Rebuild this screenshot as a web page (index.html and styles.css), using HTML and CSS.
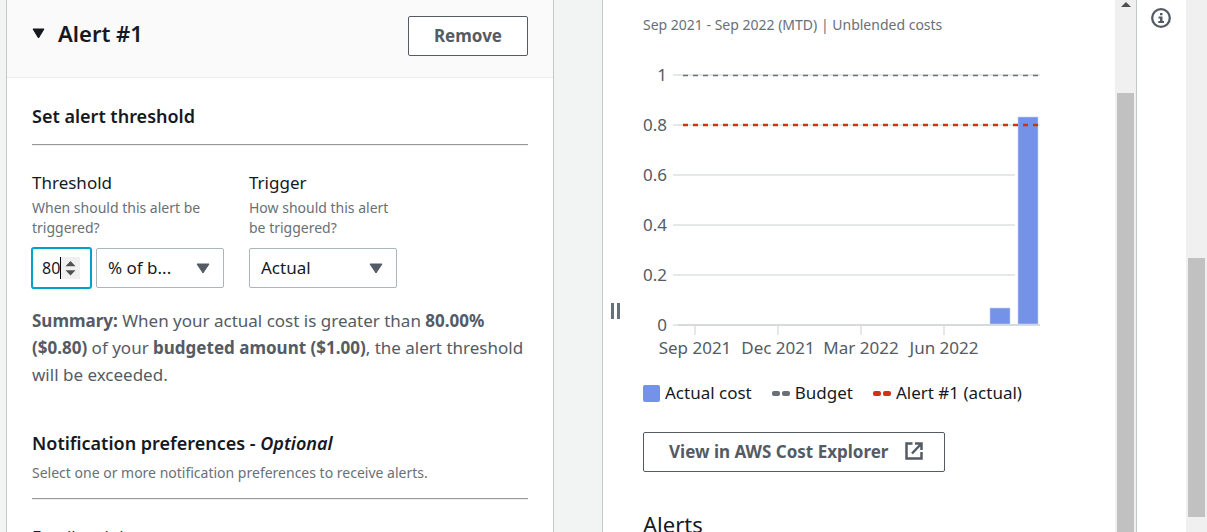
FILE: index.html
```html
<!DOCTYPE html>
<html lang="en">
<head>
<meta charset="utf-8">
<title>Configure alerts</title>
<link rel="stylesheet" href="styles.css">
</head>
<body>
<div class="app">
  <main class="main">
    <section class="card">
      <header class="card-header">
        <h2 class="card-title">
          <svg class="caret" width="14" height="11" viewBox="0 0 14 11" aria-hidden="true"><path d="M1 1h11L6.500 10z" fill="currentColor" stroke="currentColor" stroke-linejoin="round"/></svg>
          Alert #1
        </h2>
        <button class="button" type="button">Remove</button>
      </header>
      <div class="card-body">
        <h3 class="section-title">Set alert threshold</h3>
        <hr class="rule">
        <div class="fields">
          <div class="field">
            <label class="label" for="threshold">Threshold</label>
            <p class="hint">When should this alert be triggered?</p>
            <div class="controls">
              <div class="number">
                <input class="number-input" id="threshold" type="number" value="80">
                <span class="text-cursor"></span>
                <svg class="spinner" width="19" height="22" viewBox="0 0 19 22" aria-hidden="true"><path d="M0 0h19v22H0z" fill="#f0f0f0"/><path d="M4.500 9.200l5-5.200 5 5.200zM4.500 13.200h10l-5 5.200z" fill="#505050"/></svg>
              </div>
              <select class="select unit" aria-label="Threshold unit"><option>% of b...</option></select>
            </div>
          </div>
          <div class="field">
            <label class="label" for="trigger">Trigger</label>
            <p class="hint">How should this alert be triggered?</p>
            <div class="controls">
              <select class="select trigger" id="trigger"><option>Actual</option></select>
            </div>
          </div>
        </div>
        <p class="summary"><b>Summary:</b> When your actual cost is greater than <b>80.00% ($0.80)</b> of your <b>budgeted amount ($1.00)</b>, the alert threshold will be exceeded.</p>
        <h3 class="section-title">Notification preferences - <i>Optional</i></h3>
        <p class="hint preferences">Select one or more notification preferences to receive alerts.</p>
        <hr class="rule">
        <span class="label">Email recipients</span>
      </div>
    </section>
  </main>

  <aside class="side">
    <span class="handle"></span>
    <div class="side-content">
      <p class="hint">Sep 2021 - Sep 2022 (MTD) | Unblended costs</p>
      <svg class="chart" width="400" height="300" viewBox="0 0 400 300" role="img" aria-label="Cost history chart">
        <g stroke="#e3e8e8" stroke-width="2">
          <path d="M30 15h367M30 65h367M30 115h342M30 165h342M30 215h342M30 265h367"/>
          <path d="M52 265v10M135 265v10M218 265v10M301 265v10"/>
        </g>
        <path d="M35 265h362" stroke="#d5dbdb" stroke-width="2"/>
        <path d="M347 248h20v16h-20zM375 57h20v207h-20z" fill="#7492e7" stroke="#c3d0f5" stroke-width=".6"/>
        <path d="M40 15.500h357" stroke="#687078" stroke-width="1.400" stroke-dasharray="5 5"/>
        <path d="M40 65h357" stroke="#d13212" stroke-width="2.500" stroke-dasharray="5 5"/>
        <g class="axis axis-y">
          <text x="24" y="21">1</text><text x="24" y="71">0.8</text><text x="24" y="121">0.6</text><text x="24" y="171">0.4</text><text x="24" y="221">0.2</text><text x="24" y="271">0</text>
        </g>
        <g class="axis axis-x">
          <text x="52" y="294">Sep 2021</text><text x="135" y="294">Dec 2021</text><text x="218" y="294">Mar 2022</text><text x="301" y="294">Jun 2022</text>
        </g>
      </svg>
      <ul class="legend">
        <li><span class="swatch"></span>Actual cost</li>
        <li><span class="dashes"></span>Budget</li>
        <li><span class="dashes alert"></span>Alert #1 (actual)</li>
      </ul>
      <a class="button explorer" href="#">View in AWS Cost Explorer
        <svg width="20" height="20" viewBox="0 0 20 20" fill="none" stroke="currentColor" stroke-width="2.500" aria-hidden="true"><path d="M8.500 2.500H2.500v15h15v-6.500M11 2.500h6.500V9M17.500 2.500L8 12.500"/></svg>
      </a>
      <h2 class="alerts-title">Alerts</h2>
    </div>
    <div class="track side-track">
      <svg width="10" height="6" viewBox="0 0 10 6" aria-hidden="true"><path d="M0 6l5-5 5 5z" fill="#505050"/></svg>
      <span class="thumb"></span>
    </div>
  </aside>

  <nav class="rail">
    <button class="info" type="button" aria-label="Info">
      <svg width="20" height="20" viewBox="0 0 20 20" aria-hidden="true"><circle cx="10" cy="10" r="8.800" fill="none" stroke="currentColor" stroke-width="2.300"/><path d="M9 5h2.500v2.300H9zM7.500 8.500h4v4.500h1.500v2H7.300v-2H9v-2.500H7.500z" fill="currentColor"/></svg>
    </button>
  </nav>
  <div class="track page-track"><span class="thumb"></span></div>
</div>
</body>
</html>
```
FILE: styles.css
```css
* { box-sizing: border-box; }

body {
  margin: 0;
  font-family: "Noto Sans", "Open Sans", sans-serif;
  font-size: 16px;
  color: #16191f;
  background: #f2f3f3;
}

h2, h3, p, ul { margin: 0; padding: 0; }

.app { display: flex; height: 100vh; overflow: hidden; }

.main { flex: 1; min-width: 0; padding: 0 48px 0 6px; }
.card {
  min-height: 100%;
  background: #fff;
  border: 1px solid #c3c9c9;
  border-width: 0 1px;
}
.card-header {
  display: flex;
  justify-content: space-between;
  align-items: flex-start;
  padding: 16px 25px 21px;
  background: #fafafa;
  border-bottom: 1px solid #eaeded;
}
.card-title {
  display: flex;
  align-items: center;
  gap: 12px;
  font-size: 22px;
  font-weight: 600;
  line-height: 35px;
}
.button {
  display: inline-flex;
  align-items: center;
  justify-content: center;
  height: 40px;
  padding: 0 25px 2px;
  font: bold 17px "Noto Sans", "Open Sans", sans-serif;
  color: #545b64;
  background: #fff;
  border: 1px solid #545b64;
  border-radius: 2px;
  text-decoration: none;
  white-space: nowrap;
}

.card-body { padding: 24px 25px; }
.section-title { font-size: 18px; font-weight: 600; line-height: 28px; }
.rule {
  height: 2px;
  margin: 14px 0 25px;
  border: 0;
  border-top: 1px solid #999;
  border-bottom: 1px solid #eee;
}
.fields { display: flex; gap: 25px; }
.field { width: 192px; }
.field + .field { width: 148px; }
.label { display: block; font-size: 17px; line-height: 24px; }
.hint { font-size: 14px; line-height: 20px; color: #687078; }
.field .hint { margin: 3px 0 10px; }
.controls { display: flex; gap: 5px; }
.number {
  display: flex;
  align-items: center;
  flex: none;
  width: 59px;
  height: 40px;
  padding-left: 9px;
  background: #fff;
  border: 1px solid #00a1c9;
  border-radius: 2px;
  box-shadow: 0 0 0 1px #00a1c9;
}
.number-input {
  width: 18px;
  padding: 0;
  border: 0;
  outline: 0;
  font: 16px "Noto Sans", "Open Sans", sans-serif;
  color: #16191f;
  background: none;
  appearance: textfield;
}
.number-input::-webkit-inner-spin-button { appearance: none; }
.text-cursor { width: 1px; height: 22px; background: #000; }
.select {
  height: 40px;
  padding: 0 11px 2px;
  font: 17px "Noto Sans", "Open Sans", sans-serif;
  color: #16191f;
  border: 1px solid #aab7b8;
  border-radius: 2px;
  appearance: none;
  background: #fff url("data:image/svg+xml,%3Csvg xmlns='http://www.w3.org/2000/svg' width='14' height='11'%3E%3Cpath d='M1 1h12L7 10z' fill='%23545b64' stroke='%23545b64' stroke-linejoin='round'/%3E%3C/svg%3E") no-repeat right 13px center;
}
.unit { width: 128px; }
.trigger { width: 148px; }
.summary { margin: 19px 0 41px; font-size: 17px; line-height: 27px; color: #545b64; }
.preferences { margin: 6px 0 15px; }

.side {
  display: flex;
  position: relative;
  flex: none;
  width: 535px;
  background: #fff;
  border: 1px solid #c3c9c9;
  border-width: 0 1px;
}
.handle {
  position: absolute;
  left: 8px;
  top: 303px;
  width: 9px;
  height: 16px;
  border: 3px solid #687078;
  border-width: 0 3px;
}
.side-content { flex: 1; padding: 15px 0 0 40px; }
.chart { display: block; margin-top: 25px; }
.axis { font-size: 17px; fill: #545b64; }
.axis-y { text-anchor: end; }
.axis-x { text-anchor: middle; }
.legend {
  display: flex;
  gap: 20px;
  margin: 21px 0 27px;
  list-style: none;
  font-size: 17px;
  line-height: 24px;
}
.legend li { display: flex; align-items: center; gap: 5px; }
.swatch { width: 17px; height: 17px; border-radius: 2px; background: #7492e7; }
.dashes {
  display: flex;
  justify-content: space-between;
  width: 18px;
  height: 5px;
}
.dashes::before, .dashes::after { content: ""; width: 8px; border-radius: 2px; background: #687078; }
.alert::before, .alert::after { background: #d13212; }
.explorer { gap: 16px; padding-right: 20px; }
.alerts-title { margin-top: 38px; font-size: 22px; font-weight: 400; line-height: 28px; }

.track { flex: none; width: 21px; background: #f0f0f0; }
.thumb { display: block; background: #c1c1c1; }
.side-track { padding: 0 2px; }
.side-track svg { display: block; margin: 1px auto 0; }
.side-track .thumb { height: 100%; margin-top: 86px; }
.page-track { padding: 258px 2px 15px; }
.page-track .thumb { height: 100%; }

.rail { flex: none; width: 49px; padding-right: 2px; background: #fff; }
.info {
  display: block;
  margin: 8px auto;
  padding: 0;
  border: 0;
  background: none;
  color: #545b64;
}
.info svg { display: block; }
```
